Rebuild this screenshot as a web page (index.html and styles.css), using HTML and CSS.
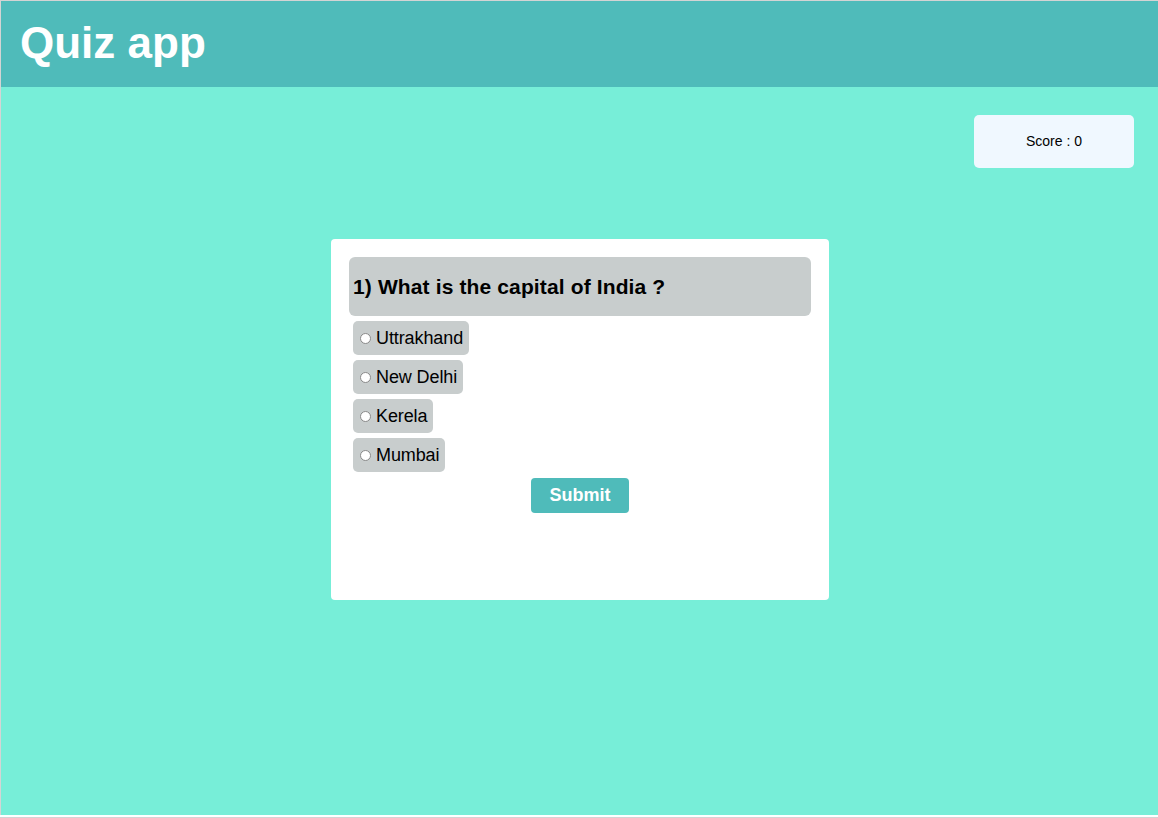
FILE: index.html
```html
<!DOCTYPE html>
<html>
<head>
<meta charset="utf-8">
<link rel="stylesheet" href="styles.css">
</head>
<body>
<div class="frame">
  <header class="topbar">
    <h1 class="title">Quiz app</h1>
  </header>
  <main class="main">
    <div class="score-row">
      <div class="score">Score : 0</div>
    </div>
    <div class="card">
      <div class="question">1) What is the capital of India ?</div>
      <div class="options">
        <label class="option"><span class="radio"></span>Uttrakhand</label>
        <label class="option"><span class="radio"></span>New Delhi</label>
        <label class="option"><span class="radio"></span>Kerela</label>
        <label class="option"><span class="radio"></span>Mumbai</label>
      </div>
      <div class="actions">
        <button class="submit">Submit</button>
      </div>
    </div>
  </main>
</div>
</body>
</html>
```

FILE: styles.css
```css
html, body {
  margin: 0;
  padding: 0;
  background: #ffffff;
}
body {
  font-family: "Liberation Sans", Arial, sans-serif;
  height: 818px;
  overflow: hidden;
  border-bottom: 1px solid #d4d4d4;
  box-sizing: border-box;
}
.frame {
  border-top: 1px solid #d4d4d4;
  border-left: 1px solid #d4d4d4;
  height: 815px;
  box-sizing: border-box;
  display: flex;
  flex-direction: column;
}
.topbar {
  background: #4fbbba;
  height: 86px;
  display: flex;
  align-items: center;
  padding-left: 19px;
  flex-shrink: 0;
}
.title {
  margin: 0;
  color: #ffffff;
  font-size: 44px;
  font-weight: bold;
  line-height: 1;
  position: relative;
  top: -1px;
}
.main {
  flex: 1;
  background: #77eed8;
  display: flex;
  flex-direction: column;
  align-items: center;
}
.score-row {
  align-self: stretch;
  display: flex;
  justify-content: flex-end;
  padding: 28px 24px 0 0;
}
.score {
  width: 160px;
  height: 53px;
  background: #f0f8ff;
  border-radius: 5px;
  display: flex;
  align-items: center;
  justify-content: center;
  font-size: 14px;
  color: #000;
  padding-bottom: 2px;
  box-sizing: border-box;
}
.card {
  margin-top: 71px;
  margin-left: 1px;
  width: 498px;
  height: 361px;
  box-sizing: border-box;
  background: #ffffff;
  border-radius: 4px;
  padding: 18px 18px;
}
.question {
  background: #c8cdcd;
  border-radius: 6px;
  height: 59px;
  display: flex;
  align-items: center;
  padding-left: 4px;
  font-size: 21px;
  font-weight: bold;
  letter-spacing: 0.13px;
  color: #000;
}
.options {
  display: flex;
  flex-direction: column;
  align-items: flex-start;
  gap: 5px;
  margin-top: 5px;
  padding-left: 4px;
}
.option {
  display: flex;
  align-items: center;
  background: #c8cdcd;
  border-radius: 5px;
  height: 34px;
  padding: 0 6px 0 7px;
  font-size: 18px;
  letter-spacing: -0.1px;
  color: #000;
}
.radio {
  width: 9px;
  height: 9px;
  border: 1px solid #8a8a8a;
  border-radius: 50%;
  background: #fff;
  margin-right: 5px;
  flex-shrink: 0;
}
.actions {
  display: flex;
  justify-content: center;
  margin-top: 6px;
}
.submit {
  background: #4fbbba;
  color: #ffffff;
  border: none;
  border-radius: 4px;
  width: 98px;
  height: 35px;
  font-family: "Liberation Sans", Arial, sans-serif;
  font-size: 18px;
  font-weight: bold;
  padding: 0 0 1px 0;
}
```
